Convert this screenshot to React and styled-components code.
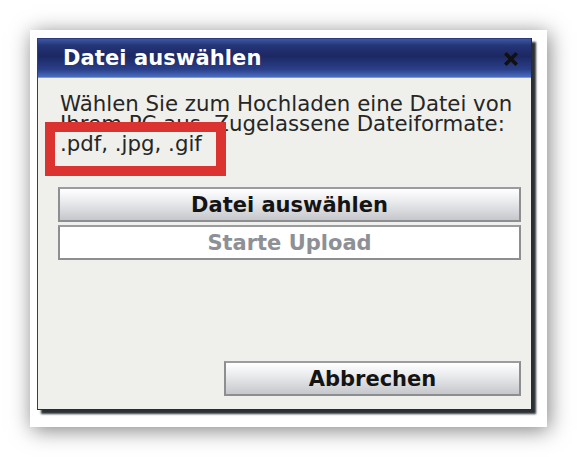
import styled, { createGlobalStyle } from "styled-components";

const Global = createGlobalStyle`
  html, body {
    margin: 0;
    padding: 0;
    background: #ffffff;
  }
  body {
    font-family: "DejaVu Sans", Verdana, sans-serif;
  }
`;

export default function App() {
  return (
    <Page>
      <Global />
      <Card>
        <Dialog>
          <TitleBar>
            <Title>Datei auswählen</Title>
            <CloseIcon viewBox="0 0 14 14">
              <path d="M2 2 L12 12 M12 2 L2 12" />
            </CloseIcon>
          </TitleBar>
          <Body>
            <Message>
              Wählen Sie zum Hochladen eine Datei von
              <br />
              Ihrem PC aus. Zugelassene Dateiformate:
              <br />
              .pdf, .jpg, .gif
            </Message>
            <ButtonStack>
              <Button>Datei auswählen</Button>
              <Button disabled>Starte Upload</Button>
            </ButtonStack>
            <Footer>
              <Button $wide={false}>Abbrechen</Button>
            </Footer>
          </Body>
          <Highlight />
        </Dialog>
      </Card>
    </Page>
  );
}

const Page = styled.div`
  width: 577px;
  height: 457px;
  padding: 30px 0 0 30px;
  box-sizing: border-box;
`;

const Card = styled.div`
  width: 517px;
  height: 397px;
  box-sizing: border-box;
  padding: 8px 15px 19px 7px;
  background: #ffffff;
  box-shadow: 2px 3px 20px rgba(0, 0, 0, 0.5);
`;

const Dialog = styled.div`
  position: relative;
  height: 100%;
  display: flex;
  flex-direction: column;
  border: 1px solid #2d3c7c;
  border-right-color: #262c30;
  border-bottom-color: #262c30;
  background: #eff0eb;
  box-shadow: 4px 4px 2px #2a3034;
`;

const TitleBar = styled.div`
  height: 38px;
  display: flex;
  align-items: center;
  justify-content: space-between;
  padding: 0 12px 0 25px;
  background: linear-gradient(
    to bottom,
    #3c57a2 0%,
    #243476 18%,
    #1c2863 45%,
    #2a3f8a 80%,
    #4a6ec0 100%
  );
  border-bottom: 1px solid #7f9bd6;
`;

const Title = styled.span`
  color: #ffffff;
  font-weight: bold;
  font-size: 21px;
  letter-spacing: 0.1px;
`;

const CloseIcon = styled.svg`
  width: 16px;
  height: 16px;
  margin-top: 2px;
  stroke: #111111;
  stroke-width: 3.2;
  fill: none;
`;

const Body = styled.div`
  flex: 1;
  display: flex;
  flex-direction: column;
  padding: 16px 10px 13px 20px;
`;

const Message = styled.p`
  margin: 0 0 0 2px;
  font-size: 21.3px;
  line-height: 20px;
  color: #262626;
  white-space: nowrap;
`;

const ButtonStack = styled.div`
  display: flex;
  flex-direction: column;
  gap: 3px;
  margin-top: 33px;
`;

const Button = styled.button`
  height: 35px;
  width: ${(p) => (p.$wide === false ? "297px" : "100%")};
  box-sizing: border-box;
  font-family: "DejaVu Sans", Verdana, sans-serif;
  font-weight: bold;
  font-size: 21px;
  color: #141414;
  border: 2px solid #8c8e92;
  border-top-color: #9a9ca0;
  background: linear-gradient(to bottom, #ffffff 0%, #eaebed 40%, #c6c7cb 100%);
  padding: 0;

  &:disabled {
    color: #8d9095;
    background: #ffffff;
  }
`;

const Footer = styled.div`
  margin-top: auto;
  display: flex;
  justify-content: flex-end;
`;

const Highlight = styled.div`
  position: absolute;
  left: 7px;
  top: 83px;
  width: 181px;
  height: 54px;
  box-sizing: border-box;
  border: 10px solid #db332f;
`;
